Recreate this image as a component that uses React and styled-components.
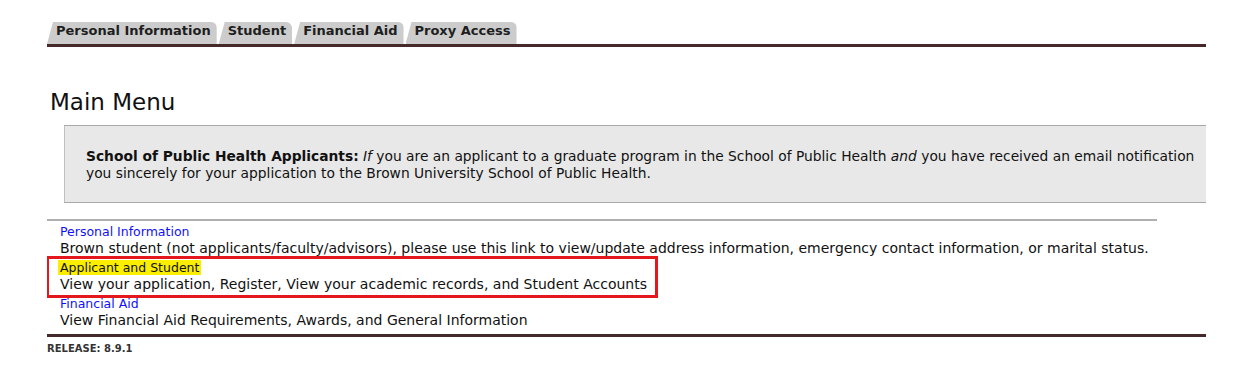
import React from "react";
import styled, { createGlobalStyle } from "styled-components";

const Global = createGlobalStyle`
  html, body { margin: 0; padding: 0; background: #fff; }
  body { font-family: "DejaVu Sans", Verdana, sans-serif; color: #000; }
`;

const Page = styled.div`
  padding: 22px 0 0 47px;
`;

const Clip = styled.div`
  width: 1159px;
  overflow: hidden;
`;

const TabBar = styled.nav`
  display: flex;
  gap: 2px;
  border-bottom: 3px solid #45292a;
`;

const Tab = styled.a`
  display: block;
  height: 22px;
  line-height: 18px;
  padding: 0 6px 0 9px;
  background: #cccccc;
  color: #1e1e1e;
  font-size: 13px;
  font-weight: bold;
  text-decoration: none;
  white-space: nowrap;
  border-top-right-radius: 6px;
  clip-path: polygon(0 100%, 6px 0, 100% 0, 100% 100%);
`;

const Heading = styled.h1`
  margin: 42px 0 0 3px;
  font-size: 23px;
  font-weight: normal;
  line-height: 26px;
  color: #111;
`;

const InfoBox = styled.div`
  margin: 10px 0 0 17px;
  width: 1400px;
  background: #e8e8e8;
  border: 1px solid #a8a8a8;
  border-left-color: #c0c0c0;
  padding: 22px 0 20px 21px;
  box-sizing: border-box;
  font-size: 13.8px;
  line-height: 17px;
  color: #111;
  white-space: nowrap;
`;

const Separator = styled.div`
  margin-top: 16px;
  width: 1110px;
  height: 2px;
  background: #b0b0b0;
`;

const Menu = styled.div`
  padding: 3px 0 0 13px;
`;

const Item = styled.div`
  position: relative;
  padding-bottom: 4px;
`;

const ItemLink = styled.a`
  display: block;
  height: 16px;
  line-height: 16px;
  font-size: 12.5px;
  color: #1010ff;
  text-decoration: none;
`;

const Highlight = styled.span`
  background: ${(p) => (p.$on ? "#fbee00" : "transparent")};
  color: ${(p) => (p.$on ? "#111" : "inherit")};
  padding: ${(p) => (p.$on ? "0 2px" : "0")};
  margin-left: ${(p) => (p.$on ? "-2px" : "0")};
`;

const Desc = styled.div`
  line-height: 16px;
  font-size: 14px;
  color: #111;
  white-space: nowrap;
`;

const Callout = styled.div`
  position: absolute;
  left: -14px;
  top: -4px;
  width: 612px;
  height: 42px;
  border: 3px solid #e3171c;
  box-sizing: border-box;
  pointer-events: none;
`;

const BottomRule = styled.div`
  margin-top: 2px;
  height: 3px;
  background: #45292a;
`;

const Release = styled.div`
  margin-top: 6px;
  font-size: 10px;
  font-weight: bold;
  color: #333;
`;

const tabs = ["Personal Information", "Student", "Financial Aid", "Proxy Access"];

const items = [
  {
    label: "Personal Information",
    desc:
      "Brown student (not applicants/faculty/advisors), please use this link to view/update address information, emergency contact information, or marital status.",
  },
  {
    label: "Applicant and Student",
    desc: "View your application, Register, View your academic records, and Student Accounts",
    marked: true,
  },
  {
    label: "Financial Aid",
    desc: "View Financial Aid Requirements, Awards, and General Information",
  },
];

export default function App() {
  return (
    <>
      <Global />
      <Page>
        <Clip>
          <TabBar>
            {tabs.map((t) => (
              <Tab key={t} href="#">
                {t}
              </Tab>
            ))}
          </TabBar>
          <Heading>Main Menu</Heading>
          <InfoBox>
            <b>School of Public Health Applicants:</b> <i>If</i> you are an applicant to a graduate
            program in the School of Public Health <i>and</i> you have received an email notification
            <br />
            you sincerely for your application to the Brown University School of Public Health.
          </InfoBox>
          <Separator />
          <Menu>
            {items.map((it) => (
              <Item key={it.label}>
                <ItemLink href="#">
                  <Highlight $on={it.marked}>{it.label}</Highlight>
                </ItemLink>
                <Desc>{it.desc}</Desc>
                {it.marked && <Callout />}
              </Item>
            ))}
          </Menu>
          <BottomRule />
          <Release>RELEASE: 8.9.1</Release>
        </Clip>
      </Page>
    </>
  );
}
